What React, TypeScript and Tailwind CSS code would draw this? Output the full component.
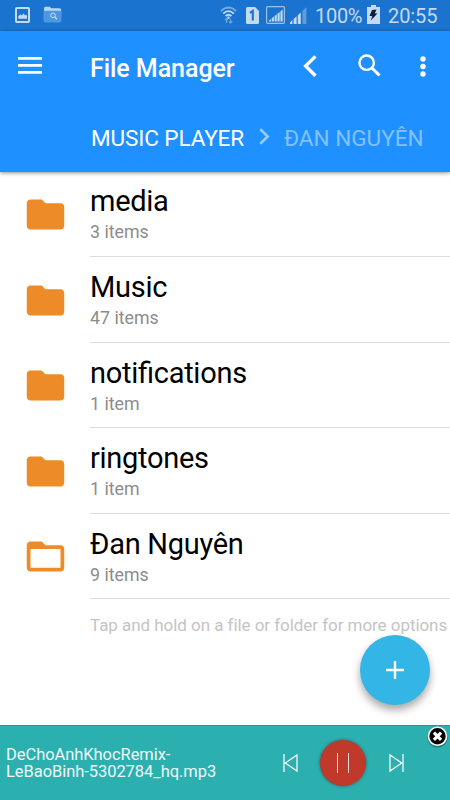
import React from "react";

interface Folder {
  name: string;
  count: string;
  open?: boolean;
}

const folders: Folder[] = [
  { name: "media", count: "3 items" },
  { name: "Music", count: "47 items" },
  { name: "notifications", count: "1 item" },
  { name: "ringtones", count: "1 item" },
  { name: "Đan Nguyên", count: "9 items", open: true },
];

const StatusBar: React.FC = () => (
  <div className="flex h-[31px] items-center bg-[#1a74cf] pl-[15px] pr-[12px] text-[20px] text-[#c4daf2]">
    {/* Notifications */}
    <svg className="mt-[-1px] h-4 w-[15px]" viewBox="0 0 15 16">
      <rect x="1" y="1" width="13" height="14" rx="0.8" fill="none" stroke="#c4daf2" strokeWidth="2" />
      <path d="M3.3 11.8V9.2L5.4 7.2l1.3 1.3L8.4 6.4l1.6 1.8 1-.8 1 1.6v2.8z" fill="#c4daf2" />
    </svg>
    <svg className="ml-[13px] mt-[-2px] h-[17px] w-[19px]" viewBox="0 0 19 17">
      <path d="M1 2.5Q1 .8 2.5.8h4.2l1.5 1.4h8.3q1.6 0 1.6 1.6V8H1z" fill="#b9d6f4" />
      <path d="M.5 4.8h18v9.6q0 2-2 2h-14q-2 0-2-2z" fill="#4c97e2" />
      <circle cx="10" cy="9.3" r="2.3" fill="none" stroke="#c4daf2" strokeWidth="1" />
      <path d="M11.7 11l2.3 2.3" stroke="#c4daf2" strokeWidth="1.4" />
    </svg>

    {/* Signal and battery */}
    <svg className="ml-auto mt-[-1px] h-[18px] w-[17px]" viewBox="0 0 17 18" fill="none">
      <path d="M.8 5.2Q8.5-2.2 16.2 5.2" stroke="#72a9e1" strokeWidth="1.7" />
      <path d="M3.2 7.6Q8.5 2.6 13.8 7.6" stroke="#c4daf2" strokeWidth="1.8" />
      <path d="M5.6 10Q8.5 7.4 11.4 10" stroke="#c4daf2" strokeWidth="1.8" />
      <circle cx="8.5" cy="11.8" r="1.2" fill="#c4daf2" />
      <path d="M6.6 17v-4M5 14.2l1.6-1.6 1.2 1.4M10.6 12.8v4M9 15.3l1.6 1.6 1.7-1.6" stroke="#72a9e1" strokeWidth="1.1" />
    </svg>
    <svg className="ml-[9px] mt-[-1px] h-[17px] w-[13px]" viewBox="0 0 13 17">
      <path d="M1.5 0H9l4 4v11.5q0 1.5-1.5 1.5h-10Q0 17 0 15.5v-14Q0 0 1.5 0z" fill="#c4daf2" />
      <path d="M4 5.8L6.8 4v9.5" fill="none" stroke="#1a74cf" strokeWidth="2.1" />
    </svg>
    <svg className="ml-[7px] mt-[-1px] h-[18px] w-[19px]" viewBox="0 0 19 18">
      <rect x=".6" y=".6" width="17.8" height="16.8" rx="1.2" fill="none" stroke="#9cc2ec" strokeWidth="1.2" />
      <path d="M3 15.5v-1l2-1.6v2.6zM5.7 15.5v-3.2l2.2-1.7v4.9zM8.6 15.5V10l2.2-1.7v7.2zM11.5 15.5V7.7L13.7 6v9.5zM14.4 15.5V5.4L16.6 3.6v11.9z" fill="#c4daf2" />
    </svg>
    <svg className="ml-[5px] mt-[-1px] h-[17px] w-[17px]" viewBox="0 0 17 17">
      <path d="M0 17v-1.5l2.4-2.4V17zM3.6 17v-5l3-2.7V17zM7.8 17V8.3l3-2.7V17z" fill="#c4daf2" />
      <path d="M12.5 17V3.8L16.4.3V17z" fill="#5e9ddd" />
    </svg>
    <span className="ml-[8px] w-[49px] tracking-[-0.3px]">100%</span>
    <svg className="ml-[3px] mt-[-2px] h-[19px] w-[13px]" viewBox="0 0 13 19">
      <path d="M4 0h5v2h4v17H0V2h4z" fill="#c4daf2" />
      <path d="M5 5l4.6-.6-1.8 3.9 2.6.2L3.8 15.6l1.5-4.7-2.8.2z" fill="#0b2038" />
    </svg>
    <span className="ml-[8px] w-[50px] tracking-[-0.1px]">20:55</span>
  </div>
);

const Header: React.FC = () => (
  <header className="relative h-[140.5px] bg-[#1e90ff] text-white shadow-[0_1px_4px_rgba(0,0,0,0.45)]">
    <div className="flex h-[70px] items-center pl-[18px]">
      <svg className="mt-[-1px] h-[17px] w-6" viewBox="0 0 24 17" fill="currentColor">
        <path d="M0 0h24v2.8H0zM0 7h24v2.8H0zM0 14h24v2.8H0z" />
      </svg>
      <h1 className="ml-[48px] mt-[5px] w-[213px] text-[25px] font-medium leading-8 tracking-[-0.05px]">File Manager</h1>
      <svg className="h-[22px] w-[14px]" viewBox="0 0 14 22" fill="none" stroke="currentColor" strokeWidth="3.4">
        <path d="M12.4 1.4L2.6 11l9.8 9.8" />
      </svg>
      <svg className="ml-[41px] mt-[-1px] h-[23px] w-[23px]" viewBox="0 0 23 23" fill="none" stroke="currentColor">
        <circle cx="8.7" cy="8.7" r="7.2" strokeWidth="2.4" />
        <path d="M13.7 13.7l7.8 7.8" strokeWidth="3" />
      </svg>
      <svg className="ml-[38.5px] h-[21px] w-[6px]" viewBox="0 0 6 21" fill="currentColor">
        <circle cx="3" cy="3" r="2.7" />
        <circle cx="3" cy="10.5" r="2.7" />
        <circle cx="3" cy="18" r="2.7" />
      </svg>
    </div>
    <nav className="flex h-[70px] items-center whitespace-nowrap pl-[91px] text-[22.5px]">
      <span className="mt-[5px] w-[153px] tracking-[-0.1px]">MUSIC PLAYER</span>
      <svg className="ml-[15px] h-[17px] w-[11px]" viewBox="0 0 11 17" fill="none" stroke="#9accff" strokeWidth="2.6">
        <path d="M1.3 1.3l7.4 7.2-7.4 7.2" />
      </svg>
      <span className="ml-[14px] mt-[5px] text-[#84c1ff]">ĐAN NGUYÊN</span>
    </nav>
  </header>
);

const FolderIcon: React.FC<{ open?: boolean }> = ({ open }) => (
  <svg className="ml-[22.5px] mt-[20.5px] h-[45px] w-[45px] shrink-0" viewBox="0 0 24 24" fill="#ed8b28">
    {open ? (
      <path d="M20 6h-8l-2-2H4c-1.1 0-1.99.9-1.99 2L2 18c0 1.1.9 2 2 2h16c1.1 0 2-.9 2-2V8c0-1.1-.9-2-2-2zm0 12H4V8h16v10z" />
    ) : (
      <path d="M10 4H4c-1.1 0-1.99.9-1.99 2L2 18c0 1.1.9 2 2 2h16c1.1 0 2-.9 2-2V8c0-1.1-.9-2-2-2h-8l-2-2z" />
    )}
  </svg>
);

const FolderRow: React.FC<{ folder: Folder }> = ({ folder }) => (
  <li className="flex h-[85.6px]">
    <FolderIcon open={folder.open} />
    <div className="ml-[22.5px] flex-1 border-b-[1.5px] border-[#dcdcdc] pt-[11.9px]">
      <div className="text-[29px] leading-9 tracking-[-0.28px] text-black [font-feature-settings:'liga'_1]">
        {folder.name}
      </div>
      <div className="mt-[1px] text-[17.8px] leading-6 text-[#8c8c8c]">{folder.count}</div>
    </div>
  </li>
);

const Player: React.FC = () => (
  <footer className="relative flex h-[75px] items-center border-t border-[#159f9c] bg-[#2bafaf] pl-[6px] text-white">
    <div className="w-[276px] text-[16.5px] leading-[17.5px] tracking-[-0.06px] text-[#effafa]">
      DeChoAnhKhocRemix-
      <br />
      LeBaoBinh-5302784_hq.mp3
    </div>
    <svg className="mt-[-1px] h-5 w-4" viewBox="0 0 16 20" fill="none" stroke="currentColor" strokeWidth="1.2">
      <path d="M2 1v18M15 2v16L3.3 10z" />
    </svg>
    <button className="ml-[22px] mt-[-1px] flex h-[46px] w-[46px] items-center justify-center gap-[10px] rounded-full bg-[#c0392b] shadow-[0_0_3px_rgba(60,60,60,0.8)]">
      <span className="h-5 w-[1.4px] bg-[#f6d9d5]" />
      <span className="h-5 w-[1.4px] bg-[#f6d9d5]" />
    </button>
    <svg className="ml-[23px] mt-[-1px] h-5 w-4" viewBox="0 0 16 20" fill="none" stroke="currentColor" strokeWidth="1.2">
      <path d="M14 1v18M1 2v16l11.7-8z" />
    </svg>
    <svg className="absolute right-[1px] top-[-1px] h-[23px] w-[23px]" viewBox="0 0 23 23">
      <circle cx="11.5" cy="12.2" r="10.3" fill="#000" opacity="0.3" />
      <circle cx="11.5" cy="11.2" r="9" fill="#000" stroke="#fff" strokeWidth="1.6" />
      <path d="M7.9 7.6l7.2 7.2M15.1 7.6l-7.2 7.2" stroke="#fff" strokeWidth="3.2" />
    </svg>
  </footer>
);

const App: React.FC = () => {
  return (
    <div className="relative flex h-[800px] w-[450px] flex-col overflow-hidden bg-white font-['Roboto',sans-serif]">
      <StatusBar />
      <Header />
      <main className="flex-1">
        <ul>
          {folders.map((folder) => (
            <FolderRow key={folder.name} folder={folder} />
          ))}
        </ul>
        <p className="ml-[90px] mt-[13.5px] whitespace-nowrap text-[17px] leading-6 tracking-[-0.05px] text-[#c4c4c4]">
          Tap and hold on a file or folder for more options
        </p>
      </main>
      <Player />

      {/* Add button floats over the list */}
      <button className="absolute bottom-[95px] right-5 flex h-[70px] w-[70px] items-center justify-center rounded-full bg-[#33b5e5] shadow-[0_5px_9px_rgba(0,0,0,0.35)]">
        <svg className="h-[18px] w-[18px]" viewBox="0 0 18 18" stroke="#fff" strokeWidth="2.4">
          <path d="M9 0v18M0 9h18" />
        </svg>
      </button>
    </div>
  );
};

export default App;
